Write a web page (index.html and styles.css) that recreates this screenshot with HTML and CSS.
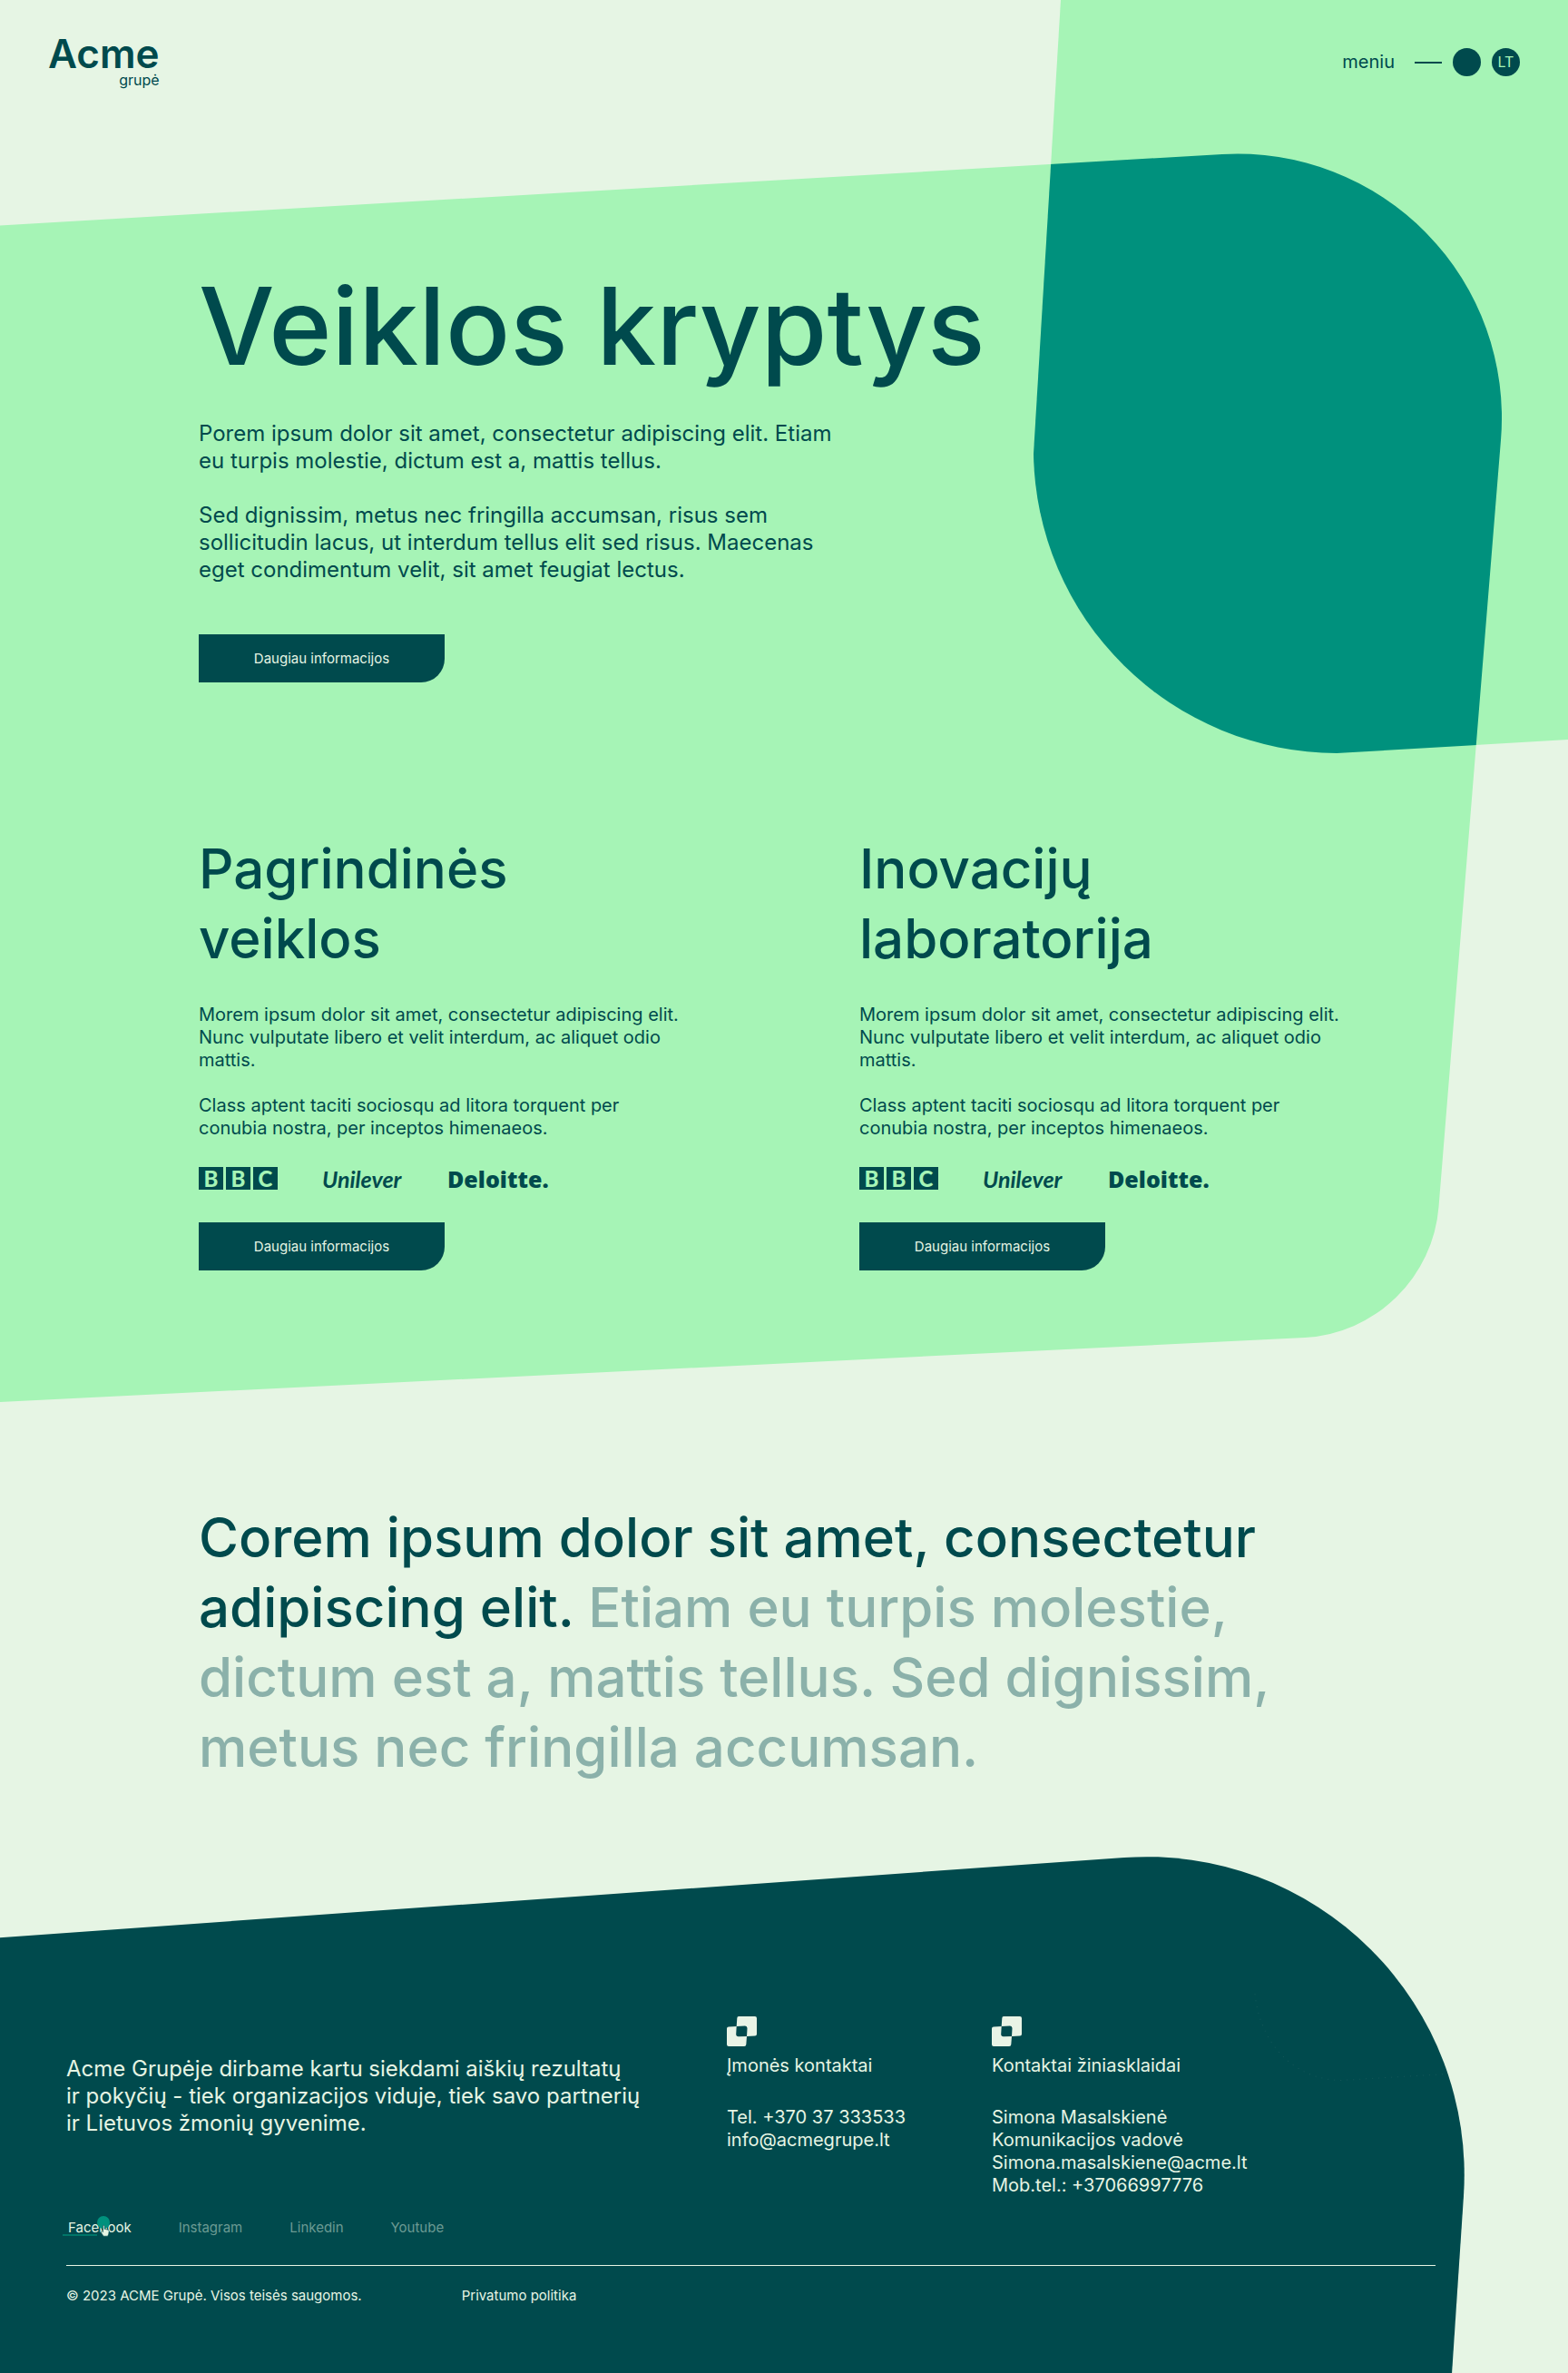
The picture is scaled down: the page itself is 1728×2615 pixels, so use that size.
FILE: index.html
```html
<!DOCTYPE html>
<html lang="lt">
<head>
<meta charset="utf-8">
<meta name="viewport" content="width=device-width, initial-scale=1">
<title>Veiklos kryptys – Acme grupė</title>
<link rel="stylesheet" href="styles.css">
</head>
<body>
<svg class="symbols" aria-hidden="true">
  <symbol id="mark" viewBox="0 0 33 33">
    <path fill="#e9f4e6" fill-rule="evenodd" d="M13 0H31Q33 0 33 2V19.500Q33 21.500 31 21.600L22 22 21.300 31Q21.200 33 19.200 33H2Q0 33 0 31V13.500Q0 11.700 2 11.500L10.700 11 11.300 2Q11.400 0 13 0ZM10.700 11 10.200 19.500Q10.200 22.300 12.800 22.300L22 22 22.500 13.500Q22.500 10.500 19.800 10.500Z"/>
  </symbol>
</svg>

<div class="top">
  <svg class="backdrop" viewBox="0 0 1728 1545" preserveAspectRatio="none" aria-hidden="true">
    <defs>
      <path id="panel" d="M0 248.500 1347 170A291 291 0 0 1 1654 485L1585.500 1330A157 157 0 0 1 1438 1474L0 1545Z"/>
      <path id="corner" d="M1169 0 1139 500A335 335 0 0 0 1473 830L1728 815V0Z"/>
      <clipPath id="panelClip"><use href="#panel"/></clipPath>
    </defs>
    <use href="#panel" fill="#a6f4b6"/>
    <use href="#corner" fill="#a6f4b6"/>
    <use href="#corner" fill="#00917d" clip-path="url(#panelClip)"/>
  </svg>

  <header class="header">
    <a class="logo" href="#"><span class="logo-name">Acme</span><span class="logo-sub">grupė</span></a>
    <nav class="tools">
      <button class="menu" type="button">meniu<span class="menu-line"></span><span class="dot"></span></button>
      <button class="dot lang" type="button">LT</button>
    </nav>
  </header>

  <main class="content">
    <section class="intro">
      <h1>Veiklos kryptys</h1>
      <p class="lead">Porem ipsum dolor sit amet, consectetur adipiscing elit. Etiam<br>eu turpis molestie, dictum est a, mattis tellus.</p>
      <p class="lead">Sed dignissim, metus nec fringilla accumsan, risus sem<br>sollicitudin lacus, ut interdum tellus elit sed risus. Maecenas<br>eget condimentum velit, sit amet feugiat lectus.</p>
      <button class="cta" type="button">Daugiau informacijos</button>
    </section>
    <div class="areas">
      <section class="area">
        <h2>Pagrindinės<br>veiklos</h2>
        <p>Morem ipsum dolor sit amet, consectetur adipiscing elit.<br>Nunc vulputate libero et velit interdum, ac aliquet odio<br>mattis.</p>
        <p>Class aptent taciti sociosqu ad litora torquent per<br>conubia nostra, per inceptos himenaeos.</p>
        <div class="brands">
          <span class="bbc"><b>B</b><b>B</b><b>C</b></span>
          <span class="unilever">Unilever</span>
          <span class="deloitte">Deloitte.</span>
        </div>
        <button class="cta" type="button">Daugiau informacijos</button>
      </section>
      <section class="area">
        <h2>Inovacijų<br>laboratorija</h2>
        <p>Morem ipsum dolor sit amet, consectetur adipiscing elit.<br>Nunc vulputate libero et velit interdum, ac aliquet odio<br>mattis.</p>
        <p>Class aptent taciti sociosqu ad litora torquent per<br>conubia nostra, per inceptos himenaeos.</p>
        <div class="brands">
          <span class="bbc"><b>B</b><b>B</b><b>C</b></span>
          <span class="unilever">Unilever</span>
          <span class="deloitte">Deloitte.</span>
        </div>
        <button class="cta" type="button">Daugiau informacijos</button>
      </section>
    </div>
  </main>
</div>

<p class="statement">Corem ipsum dolor sit amet, consectetur<br>adipiscing elit. <span class="faded">Etiam eu turpis molestie,<br>dictum est a, mattis tellus. Sed dignissim,<br>metus nec fringilla accumsan.</span></p>

<footer class="footer">
  <svg class="backdrop" viewBox="0 0 1728 571" preserveAspectRatio="none" aria-hidden="true">
    <path fill="#004a4d" d="M0 91 1239 3A350 350 0 0 1 1613 375L1600 571H0Z"/>
    <path class="trace" d="M1383 153C1388 205 1424 248 1479 248L1595 241"/>
  </svg>
  <div class="footer-main">
    <p class="mission">Acme Grupėje dirbame kartu siekdami aiškių rezultatų<br>ir pokyčių - tiek organizacijos viduje, tiek savo partnerių<br>ir Lietuvos žmonių gyvenime.</p>
    <section class="contact">
      <svg class="mark" aria-hidden="true"><use href="#mark"/></svg>
      <h3>Įmonės kontaktai</h3>
      <p>Tel. +370 37 333533<br><a href="mailto:info@acmegrupe.lt">info@acmegrupe.lt</a></p>
    </section>
    <section class="contact">
      <svg class="mark" aria-hidden="true"><use href="#mark"/></svg>
      <h3>Kontaktai žiniasklaidai</h3>
      <p>Simona Masalskienė<br>Komunikacijos vadovė<br><a href="mailto:Simona.masalskiene@acme.lt">Simona.masalskiene@acme.lt</a><br>Mob.tel.: +37066997776</p>
    </section>
  </div>
  <nav class="social">
    <a class="active" href="#">Facebook
      <svg class="pointer" viewBox="0 0 56 24" aria-hidden="true">
        <path fill="#007668" d="M0 20h38v2H0z"/>
        <circle cx="45" cy="7" r="7" fill="#00917d"/>
        <path fill="#e6f5e4" stroke="#004a4d" stroke-width=".6" d="M44.500 10.500q1.200-.8 1.700.5v3.300l4 .9q1 .3 1 1.400l-.5 3.400-1 2.200h-4.600l-2.900-4.200q-.2-1.200 1-1.200l1.300 1z"/>
      </svg>
    </a>
    <a href="#">Instagram</a>
    <a href="#">Linkedin</a>
    <a href="#">Youtube</a>
  </nav>
  <div class="legal">
    <span>© 2023 ACME Grupė. Visos teisės saugomos.</span>
    <a href="#">Privatumo politika</a>
  </div>
</footer>
</body>
</html>
```
FILE: styles.css
```css
* { box-sizing: border-box; margin: 0; padding: 0; }

body {
  background: #e6f5e4;
  color: #004a4d;
  font-family: Inter, "Open Sans", sans-serif;
  font-weight: 400;
  font-size: 20px;
  line-height: 25px;
}

a { color: inherit; text-decoration: none; }
button { font: inherit; color: inherit; background: none; border: 0; cursor: pointer; }
.symbols { position: absolute; width: 0; height: 0; }

.top { position: relative; padding-bottom: 145px; }
.backdrop { position: absolute; inset: 0; width: 100%; height: 100%; z-index: -1; }

/* header */
.header { display: flex; justify-content: space-between; padding: 32px 53px 0; }
.logo { display: flex; flex-direction: column; align-items: flex-end; padding-top: 6px; }
.logo-name { font-size: 44px; line-height: 42px; font-weight: 600; }
.logo-sub { font-size: 16px; line-height: 16px; }
.tools { display: flex; align-items: center; gap: 12px; height: 73px; }
.menu { display: flex; align-items: center; gap: 12px; }
.menu-line { width: 30px; height: 2px; margin-left: 10px; background: #004a4d; }
.dot { width: 31px; height: 31px; border-radius: 50%; background: #004a4d; }
.lang { color: #a6f4b6; font-size: 16px; }

/* content */
.content { padding: 177px 219px 0; }
h1 { font-size: 118px; line-height: 154px; font-weight: 500; margin-bottom: 27px; white-space: nowrap; }
.lead { font-size: 24px; line-height: 30px; margin-bottom: 30px; }
.cta {
  display: block;
  width: 271px;
  height: 53px;
  border-radius: 0 0 26px 0;
  background: #004a4d;
  color: #e6f5e4;
  font-size: 15px;
}
.intro .cta { margin-top: 56px; }
.areas { display: grid; grid-template-columns: 1fr 1fr; gap: 166px; margin-top: 167px; }
h2 { font-size: 60px; line-height: 77px; font-weight: 500; margin-bottom: 33px; white-space: nowrap; }
.area p { margin-bottom: 25px; white-space: nowrap; }
.brands { display: flex; align-items: center; height: 35px; margin-bottom: 31px; }
.bbc { display: flex; gap: 3px; width: 136px; font: 700 24px/25px Lato, sans-serif; }
.bbc b { width: 27px; height: 25px; background: #004a4d; color: #a6f4b6; text-align: center; }
.unilever { width: 138px; font: italic 700 25px/34px Lato, sans-serif; }
.deloitte { font: 800 25px/32px "Open Sans", sans-serif; }

.statement { padding: 111px 219px 80px; font-size: 60px; font-weight: 500; line-height: 77px; }
.faded { color: #8bb1aa; }

/* footer */
.footer { position: relative; padding: 178px 146px 74px 73px; color: #e6f5e4; }
.trace { fill: none; stroke: #14585a; stroke-width: 1; stroke-dasharray: 1 6; }
.footer-main { display: grid; grid-template-columns: 728px 292px 1fr; }
.mission { padding-top: 43px; font-size: 24px; line-height: 30px; }
.mark { display: block; width: 33px; height: 33px; }
.contact h3 { font-size: 20px; font-weight: 400; margin: 9px 0 32px; }
.social { display: flex; gap: 52px; margin-top: 21px; padding: 0 2px 29px; border-bottom: 1px solid #e6f5e4; font-size: 15px; color: #6b9a93; }
.active { position: relative; color: #e6f5e4; }
.pointer { position: absolute; left: -6px; top: 0; width: 56px; height: 24px; }
.legal { display: flex; gap: 110px; margin-top: 20px; font-size: 15px; }
```
